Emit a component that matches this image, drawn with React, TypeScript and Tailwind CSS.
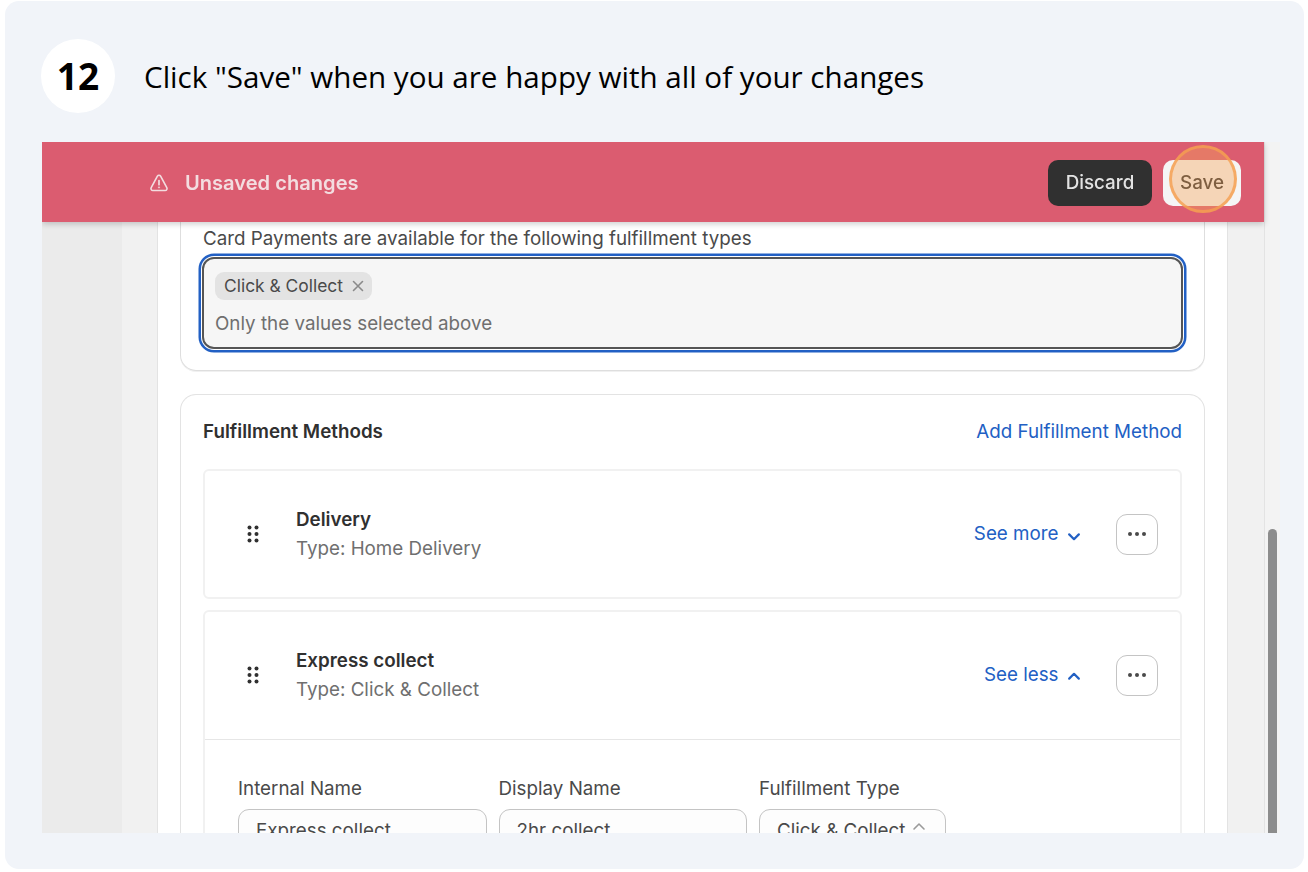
import React from "react";

function Dots() {
  return (
    <svg width="12" height="18" viewBox="0 0 12 18" className="fill-[#303030]">
      <circle cx="2.5" cy="2.5" r="2" />
      <circle cx="9.5" cy="2.5" r="2" />
      <circle cx="2.5" cy="9" r="2" />
      <circle cx="9.5" cy="9" r="2" />
      <circle cx="2.5" cy="15.5" r="2" />
      <circle cx="9.5" cy="15.5" r="2" />
    </svg>
  );
}

function Chevron({ up }: { up?: boolean }) {
  return (
    <svg width="12" height="8" viewBox="0 0 12 8" fill="none" className={up ? "stroke-[#2260c4] mt-[2px]" : "stroke-[#2260c4] mt-[5px]"}>
      <path d={up ? "M1.2 6.6 6 1.8l4.8 4.8" : "M1.2 1.4 6 6.2l4.8-4.8"} strokeWidth="2.2" strokeLinecap="round" strokeLinejoin="round" />
    </svg>
  );
}

function More() {
  return (
    <div className="w-[42px] h-[41px] rounded-[11px] border border-[#c4c4c4] bg-white flex items-center justify-center gap-[3px]">
      <span className="w-[4px] h-[4px] rounded-full bg-[#4a4a4a]" />
      <span className="w-[4px] h-[4px] rounded-full bg-[#4a4a4a]" />
      <span className="w-[4px] h-[4px] rounded-full bg-[#4a4a4a]" />
    </div>
  );
}

function MethodHead({ title, type, link, up }: { title: string; type: string; link: string; up?: boolean }) {
  return (
    <div className="h-[126px] flex items-center pl-[42px] pr-[22.5px]">
      <Dots />
      <div className="ml-[37px] flex-1 pt-[1px]">
        <div className="text-[18.8px] leading-[28px] font-semibold text-[#303030]">{title}</div>
        <div className="text-[18.8px] leading-[29px] text-[#6f6f6f]">{type}</div>
      </div>
      <div className="flex items-center gap-[9px] text-[18.8px] text-[#2260c4] mr-[36px]">
        <span>{link}</span>
        <Chevron up={up} />
      </div>
      <More />
    </div>
  );
}

function Field({ label, value, w, chevron }: { label: string; value: string; w: string; chevron?: boolean }) {
  return (
    <div className={w}>
      <div className="text-[18.8px] leading-[24px] text-[#4a4a4a] mb-[8px]">{label}</div>
      <div className="h-[44px] rounded-[11px] border border-[#c4c4c4] bg-[#fdfdfd] flex items-start justify-between pl-[17px] pr-[19px] pt-[9px] text-[18.8px] leading-[24px] text-[#4a4a4a]">
        <span>{value}</span>
        {chevron && (
          <svg width="14" height="9" viewBox="0 0 14 9" fill="none" className="stroke-[#9a9a9a] mt-[3px]">
            <path d="M2 7l5-5 5 5" strokeWidth="1.6" strokeLinecap="round" strokeLinejoin="round" />
          </svg>
        )}
      </div>
    </div>
  );
}

export default function App() {
  return (
    <div className="w-[1308px] h-[872px] bg-white pl-[5px] pt-[1px] overflow-hidden" style={{ fontFamily: "Inter, sans-serif" }}>
      <div className="w-[1299px] h-[868px] rounded-[14px] bg-[#f1f4f9] overflow-hidden">
        <div className="h-[141px] pl-[36px] pt-[38px] flex items-start">
          <div className="w-[74px] h-[74px] rounded-full bg-white flex items-center justify-center text-[37px] font-bold text-black" style={{ fontFamily: "'Open Sans', sans-serif" }}>
            12
          </div>
          <div className="ml-[29px] h-[74px] pt-[2px] flex items-center text-[29.6px] text-black" style={{ fontFamily: "'Open Sans', sans-serif" }}>
            Click "Save" when you are happy with all of your changes
          </div>
        </div>

        <div className="relative ml-[37px] w-[1238px] h-[691px] overflow-hidden flex blur-[0.4px]">
          <div className="w-[1222px] flex flex-col relative">
            <div className="relative z-10 h-[80px] shrink-0 bg-[#db5c70] shadow-[0_2px_6px_rgba(0,0,0,0.2)] flex items-center pl-[107px] pr-[23px]">
              <svg width="20" height="20" viewBox="0 0 20 20" fill="none" className="stroke-[#f3dde0] mt-[1px]">
                <path d="M8.4 3.2 2.2 14.6c-.7 1.3.2 2.9 1.7 2.9h12.2c1.5 0 2.4-1.6 1.7-2.9L11.6 3.2c-.7-1.3-2.5-1.3-3.2 0Z" strokeWidth="1.6" />
                <path d="M10 7.5v4.2" strokeWidth="1.7" strokeLinecap="round" />
                <circle cx="10" cy="14.4" r="0.6" strokeWidth="1" />
              </svg>
              <div className="ml-[16px] flex-1 pt-[3px] text-[20.1px] font-semibold text-[#f3dde0]">Unsaved changes</div>
              <div className="mt-[1px] w-[104px] h-[46px] rounded-[10px] bg-[#303030] flex items-center justify-center pt-[1px] text-[18.8px] font-medium text-[#e3e3e3]">Discard</div>
              <div className="mt-[1px] ml-[11px] w-[78px] h-[46px] rounded-[10px] bg-[#f5f5f5] flex items-center justify-center pt-[1px] text-[18.8px] font-medium text-[#303030]">Save</div>
            </div>

            <div className="flex flex-1 min-h-0">
              <div className="w-[80px] bg-[#ebebeb]" />
              <div className="w-[35px] bg-[#f1f1f1]" />
              <div className="w-[1071px] shrink-0 bg-white border-x border-[#e3e3e3] px-[22px]">
                <div className="h-[150px] -mt-[1px] rounded-b-[16px] border border-t-0 border-[#dedede] px-[22px] shadow-[0_1px_0_rgba(0,0,0,0.06)]">
                  <div className="pt-[6px] text-[18.8px] leading-[24px] text-[#4a4a4a]">Card Payments are available for the following fulfillment types</div>
                  <div className="mt-[6px] h-[92px] -mx-[1px] rounded-[12px] bg-[#f6f6f6] border-2 border-[#555555] shadow-[0_0_0_1px_#ffffff,0_0_0_3.5px_#2260c4] pl-[11px] pt-[13px]">
                    <div className="inline-flex items-center h-[28px] rounded-[9px] bg-[#e3e3e3] pl-[9px] pr-[8px] text-[17.4px] text-[#4a4a4a]">
                      Click &amp; Collect
                      <svg width="12" height="12" viewBox="0 0 12 12" fill="none" className="ml-[9px] stroke-[#8a8a8a]">
                        <path d="M1.5 1.5l9 9m0-9-9 9" strokeWidth="1.6" strokeLinecap="round" />
                      </svg>
                    </div>
                    <div className="mt-[12px] text-[18.8px] leading-[24px] text-[#6f6f6f]">Only the values selected above</div>
                  </div>
                </div>

                <div className="mt-[23px] rounded-t-[16px] border border-b-0 border-[#e3e3e3] px-[22px] h-[600px]">
                  <div className="h-[74px] flex items-center justify-between text-[18.8px]">
                    <span className="font-semibold text-[#303030]">Fulfillment Methods</span>
                    <span className="text-[#2260c4]">Add Fulfillment Method</span>
                  </div>
                  <div className="rounded-[6px] border-2 border-[#f1f1f1]">
                    <MethodHead title="Delivery" type="Type: Home Delivery" link="See more" />
                  </div>
                  <div className="mt-[11px] rounded-t-[6px] border-2 border-[#f1f1f1]">
                    <MethodHead title="Express collect" type="Type: Click &amp; Collect" link="See less" up />
                    <div className="mt-[1px] border-t border-[#e6e6e6] pl-[33px] pt-[37px] flex gap-[12px]">
                      <Field label="Internal Name" value="Express collect" w="w-[248.5px]" />
                      <Field label="Display Name" value="2hr collect" w="w-[248.5px]" />
                      <Field label="Fulfillment Type" value="Click &amp; Collect" w="w-[187px]" chevron />
                    </div>
                  </div>
                </div>
              </div>
              <div className="flex-1 bg-[#f1f1f1]" />
            </div>
          </div>

          <div className="w-[16px] bg-[#f3f3f3] border-l border-[#e3e3e3] flex flex-col justify-end pl-[3px]">
            <div className="w-[9px] h-[304px] rounded-t-[5px] bg-[#8c8c8c]" />
          </div>

          <div className="absolute z-20 left-[1127px] top-[3px] w-[68px] h-[68px] rounded-full bg-[#f5a55a]/40 border-[3px] border-[#f59f50]/80" />
        </div>
      </div>
    </div>
  );
}
